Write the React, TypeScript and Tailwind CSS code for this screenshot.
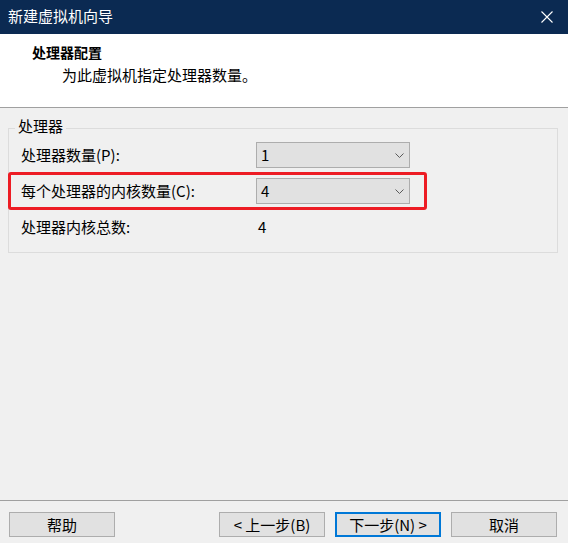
import React from "react";

const font = { fontFamily: '"Noto Sans CJK SC", "Noto Sans", sans-serif' };

// Fake Windows combobox
const Combo = ({ value }: { value: string }) => (
  <div className="flex h-[26px] w-[154px] items-center justify-between border border-[#adadad] bg-[#e1e1e1] pl-[4px] pr-[5px] text-[15px] leading-[18px] text-black">
    <span>{value}</span>
    <svg width="9" height="5" viewBox="0 0 9 5" fill="none">
      <polyline points="0.5,0.5 4.5,4.5 8.5,0.5" stroke="#5a5a5a" strokeWidth="1" />
    </svg>
  </div>
);

const Btn = ({ label, primary }: { label: string; primary?: boolean }) => (
  <button
    className={
      primary
        ? "flex h-[25px] w-[106px] items-center justify-center border-2 border-[#0078d7] bg-[#e1e1e1] text-[15px] leading-[18px] text-black"
        : "flex h-[25px] w-[106px] items-center justify-center border border-[#adadad] bg-[#e1e1e1] text-[15px] leading-[18px] text-black"
    }
  >
    {label}
  </button>
);

const App = () => {
  return (
    <div className="flex h-[543px] w-[568px] flex-col bg-[#f0f0f0]" style={font}>
      {/* Title bar */}
      <div className="flex h-[34px] shrink-0 items-center justify-between bg-[#0b2a52] pb-[2px] pl-[8px] pr-[15px]">
        <span className="text-[15px] leading-[18px] text-white">新建虚拟机向导</span>
        <svg width="12" height="12" viewBox="0 0 12 12" className="mt-[2px]">
          <path d="M0.5 0.5 L11.5 11.5 M11.5 0.5 L0.5 11.5" stroke="#ffffff" strokeWidth="1.1" />
        </svg>
      </div>

      {/* Header */}
      <div className="h-[74px] shrink-0 border-b border-[#a0a0a0] bg-white pt-[9px]">
        <div className="pl-[32px] text-[14px] font-bold leading-[18px] text-black">处理器配置</div>
        <div className="mt-[5px] pl-[62px] text-[15px] leading-[18px] text-black">为此虚拟机指定处理器数量。</div>
      </div>

      {/* Content */}
      <div className="flex-1">
        <fieldset className="ml-[8px] mr-[10px] mt-[9px] border border-[#dcdcdc] pb-[12px]">
          <legend className="ml-[6px] px-[3px] pb-[4px] text-[15px] leading-[18px] text-black">处理器</legend>

          <div className="mt-[3px] flex items-center pl-[12px]">
            <span className="w-[235px] text-[15px] leading-[18px] text-black">处理器数量(P):</span>
            <Combo value="1" />
          </div>

          <div className="-ml-[1px] mt-[4px] flex w-[419px] items-center rounded-[3px] border-[3px] border-[#ed1c24] py-[3px] pl-[10px] pr-[14px]">
            <span className="w-[235px] text-[15px] leading-[18px] text-black">每个处理器的内核数量(C):</span>
            <Combo value="4" />
          </div>

          <div className="mt-[4px] flex h-[26px] items-center pl-[12px]">
            <span className="w-[235px] text-[15px] leading-[18px] text-black">处理器内核总数:</span>
            <span className="pl-[2px] text-[15px] leading-[18px] text-black">4</span>
          </div>
        </fieldset>
      </div>

      {/* Footer */}
      <div className="flex h-[43px] shrink-0 items-start justify-between border-t border-[#a0a0a0] pl-[9px] pr-[11px] pt-[11px]">
        <Btn label="帮助" />
        <div className="flex gap-[10px]">
          <Btn label="< 上一步(B)" />
          <Btn label="下一步(N) >" primary />
          <Btn label="取消" />
        </div>
      </div>
    </div>
  );
};

export default App;
